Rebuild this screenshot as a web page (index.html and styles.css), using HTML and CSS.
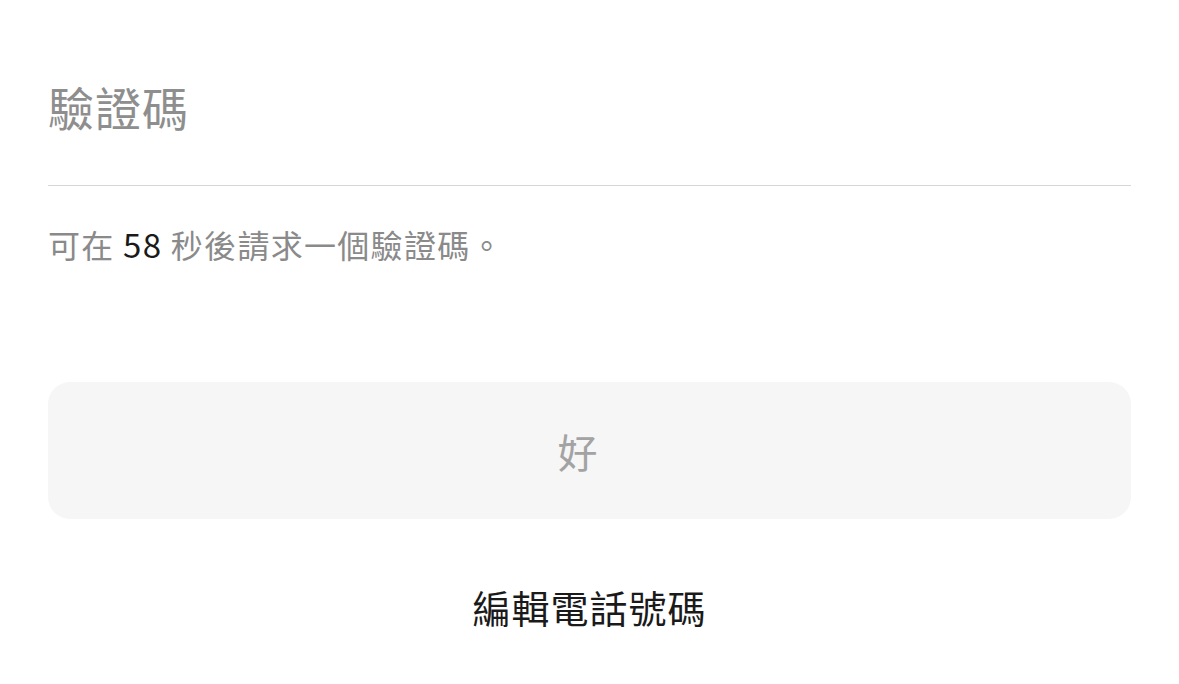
FILE: index.html
```html
<!DOCTYPE html>
<html lang="zh-Hant">
<head>
  <meta charset="utf-8">
  <title>驗證碼</title>
  <link rel="stylesheet" href="styles.css">
</head>
<body>
  <div class="verify">
    <div class="code-field">
      <input type="text" class="code-input" placeholder="驗證碼">
    </div>
    <p class="resend">可在 <span class="count">58</span> 秒後請求一個驗證碼。</p>
    <button class="ok-btn" disabled>好</button>
    <a class="edit-link" href="#">編輯電話號碼</a>
  </div>
</body>
</html>
```

FILE: styles.css
```css
body {
  margin: 0;
  padding: 0;
  background: #fff;
  font-family: "Noto Sans CJK TC", "Noto Sans", sans-serif;
}

.verify {
  display: flex;
  flex-direction: column;
  padding: 0 48px;
}

.code-field {
  padding-top: 74px;
  border-bottom: 1px solid #d6d6d6;
}

.code-input {
  width: 100%;
  border: none;
  outline: none;
  height: 111px;
  box-sizing: border-box;
  padding: 0 0 47px;
  font-family: inherit;
  font-size: 46px;
  letter-spacing: 1px;
  color: #222;
  background: transparent;
}

.code-input::placeholder {
  color: #8e8e8e;
}

.resend {
  margin: 36px 0 0;
  font-size: 32px;
  line-height: 44px;
  letter-spacing: 1.3px;
  color: #8a8a8a;
}

.count {
  font-size: 33px;
  color: #1a1a1a;
}

.ok-btn {
  margin-top: 116px;
  height: 137px;
  padding: 0 24px 0 0;
  border: none;
  border-radius: 22px;
  background: #f6f6f6;
  font-family: inherit;
  font-size: 40px;
  color: #a3a3a3;
}

.edit-link {
  align-self: center;
  margin-top: 62px;
  font-size: 38px;
  line-height: 52px;
  letter-spacing: 1px;
  color: #1a1a1a;
  text-decoration: none;
}
```
